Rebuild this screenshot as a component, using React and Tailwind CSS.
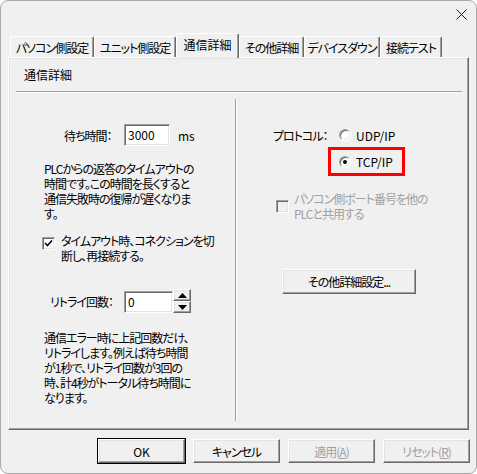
import React from "react";

// classic 3D edges
const raised =
    "border border-t-white border-l-white border-r-[#696969] border-b-[#696969] shadow-[inset_-1px_-1px_0_#a0a0a0,inset_1px_1px_0_#e3e3e3]";
const sunken =
    "border border-t-[#a0a0a0] border-l-[#a0a0a0] border-r-white border-b-white shadow-[inset_1px_1px_0_#696969,inset_-1px_-1px_0_#e3e3e3]";

const tabs = [
    { label: "パソコン側設定", w: "w-[84px]" },
    { label: "ユニット側設定", w: "w-[82px]" },
    { label: "通信詳細", w: "w-[63px]", active: true },
    { label: "その他詳細", w: "w-[65px]" },
    { label: "デバイスダウン", w: "w-[76px]" },
    { label: "接続テスト", w: "w-[62px]" },
];

function Tab({ label, w, active }) {
    if (active) {
        return (
            <div
                className={`${w} relative z-10 -mb-px flex h-[25px] justify-center whitespace-nowrap rounded-t-[2px] border-t border-l border-r border-t-white border-l-white border-r-[#696969] bg-[#f0f0f0] pt-[3px] leading-[15px] tracking-normal shadow-[inset_-1px_0_0_#a0a0a0]`}
            >
                {label}
            </div>
        );
    }
    return (
        <div
            className={`${w} flex h-[21px] justify-center whitespace-nowrap rounded-t-[2px] border-t border-l border-r border-t-white border-l-white border-r-[#696969] pt-[3px] leading-[15px] shadow-[inset_-1px_0_0_#a0a0a0]`}
        >
            {label}
        </div>
    );
}

function CheckBox({ checked, disabled }) {
    return (
        <div
            className={`${sunken} flex h-[13px] w-[13px] shrink-0 items-center justify-center ${disabled ? "bg-[#f0f0f0]" : "bg-white"}`}
        >
            {checked && (
                <svg width="9" height="9" viewBox="0 0 9 9">
                    <path d="M1 4 L3.5 6.5 L8 1.5" fill="none" stroke="#000" strokeWidth="1.6" />
                </svg>
            )}
        </div>
    );
}

function Radio({ checked }) {
    return (
        <div className="flex h-[12px] w-[12px] shrink-0 items-center justify-center rounded-full border border-t-[#a0a0a0] border-l-[#a0a0a0] border-r-white border-b-white bg-white shadow-[inset_1px_1px_0_#696969,inset_-1px_-1px_0_#e3e3e3]">
            {checked && <div className="h-[4px] w-[4px] rounded-full bg-black" />}
        </div>
    );
}

function Button({ children, primary, disabled, className = "" }) {
    return (
        <div
            className={`${raised} ${primary ? "outline outline-1 outline-black" : ""} flex h-[24px] items-center justify-center whitespace-nowrap bg-[#f0f0f0] ${disabled ? "text-[#a0a0a0]" : "text-black"} ${className}`}
        >
            {children}
        </div>
    );
}

function SpinButton({ up }) {
    return (
        <div className={`${raised} flex h-[12px] w-[18px] items-center justify-center bg-[#f0f0f0]`}>
            <svg width="9" height="5" viewBox="0 0 9 5">
                <path d={up ? "M0 5 L4.5 0 L9 5 Z" : "M0 0 L9 0 L4.5 5 Z"} fill="#000" />
            </svg>
        </div>
    );
}

export default function App() {
    return (
        <div
            className={
                'flex h-[474px] w-[477px] flex-col overflow-hidden rounded-[8px] border border-[#a8a8a8] bg-[#f0f0f0] font-["Noto_Sans_CJK_JP","Noto_Sans",sans-serif] text-[12px] leading-[15px] tracking-[-1px] text-black [font-feature-settings:"palt"]'
            }
        >
            {/* title bar */}
            <div className="flex h-[32px] shrink-0 justify-end pt-[8px] pr-[9px]">
                <svg width="11" height="11" viewBox="0 0 11 11">
                    <path d="M0.5 0.5 L10.5 10.5 M10.5 0.5 L0.5 10.5" stroke="#1a1a1a" strokeWidth="1" />
                </svg>
            </div>

            {/* tab strip */}
            <div className="flex h-[24px] shrink-0 items-end pl-[9px]">
                {tabs.map((t) => (
                    <Tab key={t.label} {...t} />
                ))}
            </div>

            {/* tab page */}
            <div className="ml-[7px] flex h-[373px] w-[461px] shrink-0 flex-col border border-t-white border-l-white border-r-[#696969] border-b-[#696969] shadow-[inset_-1px_-1px_0_#a0a0a0,inset_1px_1px_0_#e3e3e3]">
                <div className="mt-[9px] ml-[15px] tracking-normal">通信詳細</div>
                <div className="mt-[9px] ml-[7px] mr-[6px] h-[2px] border-t border-b border-t-[#a0a0a0] border-b-white" />

                <div className="flex flex-1">
                    {/* left column */}
                    <div className="flex w-[226px] flex-col">
                        <div className="mt-[31px] flex h-[22px] items-center">
                            <span className="ml-[55px] w-[60px] whitespace-nowrap">待ち時間：</span>
                            <div
                                className={`${sunken} h-[22px] w-[46px] bg-white pl-[3px] leading-[20px] tracking-normal`}
                            >
                                3000
                            </div>
                            <span className="ml-[8px] tracking-normal">ms</span>
                        </div>

                        <p className="mt-[15px] ml-[35px] whitespace-nowrap">
                            PLCからの返答のタイムアウトの
                            <br />
                            時間です。この時間を長くすると
                            <br />
                            通信失敗時の復帰が遅くなりま
                            <br />
                            す。
                        </p>

                        <div className="mt-[12px] ml-[33px] flex">
                            <div className="mt-[4px]">
                                <CheckBox checked />
                            </div>
                            <span className="ml-[6px] whitespace-nowrap">
                                タイムアウト時、コネクションを切
                                <br />
                                断し、再接続する。
                            </span>
                        </div>

                        <div className="mt-[26px] flex h-[24px] items-end">
                            <span className="ml-[41px] h-[22px] w-[74px] whitespace-nowrap leading-[22px]">
                                リトライ回数：
                            </span>
                            <div className={`${sunken} h-[22px] w-[49px] bg-white pl-[3px] leading-[20px]`}>0</div>
                            <div className="flex flex-col">
                                <SpinButton up />
                                <SpinButton />
                            </div>
                        </div>

                        <p className="mt-[17px] ml-[35px] whitespace-nowrap">
                            通信エラー時に上記回数だけ、
                            <br />
                            リトライします。例えば待ち時間
                            <br />
                            が1秒で、リトライ回数が3回の
                            <br />
                            時、計4秒がトータル待ち時間に
                            <br />
                            なります。
                        </p>
                    </div>

                    {/* etched divider */}
                    <div className="mt-[6px] h-[322px] w-[2px] border-l border-r border-l-[#a0a0a0] border-r-white" />

                    {/* right column */}
                    <div className="flex flex-1 flex-col">
                        <div className="mt-[31px] ml-[36px] flex h-[22px] items-center">
                            <span className="w-[66px] whitespace-nowrap">プロトコル：</span>
                            <Radio />
                            <span className="ml-[5px] tracking-normal">UDP/IP</span>
                        </div>

                        <div className="mt-[1px] ml-[91px] flex h-[29px] w-[77px] items-center border-[3px] border-[#ff0000] pl-[8px]">
                            <Radio checked />
                            <span className="ml-[5px] tracking-normal">TCP/IP</span>
                        </div>

                        <div className="mt-[15px] ml-[39px] flex text-[#a0a0a0]">
                            <div className="mt-[9px]">
                                <CheckBox disabled />
                            </div>
                            <span className="ml-[5px] whitespace-nowrap">
                                パソコン側ポート番号を他の
                                <br />
                                PLCと共用する
                            </span>
                        </div>

                        <Button className="mt-[48px] ml-[45px] h-[25px] w-[134px]">その他詳細設定...</Button>
                    </div>
                </div>
            </div>

            {/* dialog buttons */}
            <div className="mt-[9px] flex justify-end gap-[8px] pr-[6px]">
                <Button primary className="w-[87px] tracking-normal">
                    OK
                </Button>
                <Button className="w-[87px]">キャンセル</Button>
                <Button disabled className="w-[87px]">
                    適用(<u>A</u>)
                </Button>
                <Button disabled className="w-[87px]">
                    リセット(<u>R</u>)
                </Button>
            </div>
        </div>
    );
}
